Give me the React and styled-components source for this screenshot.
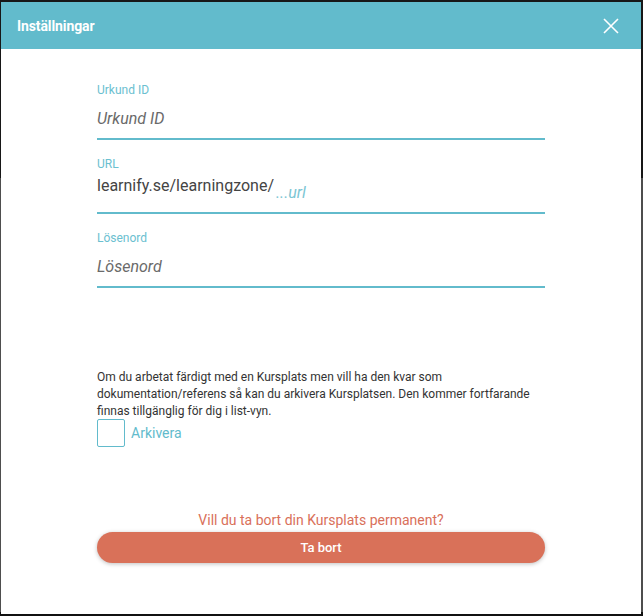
import React from "react";
import styled, { createGlobalStyle } from "styled-components";

const Global = createGlobalStyle`
  html, body { margin: 0; padding: 0; background: #1a1a1a; }
  body { font-family: Roboto, "Liberation Sans", Arial, sans-serif; }
  * { box-sizing: border-box; }
`;

const Backdrop = styled.div`
  height: 616px;
  padding: 2px 2px 2px 1px;
  background: linear-gradient(#171717 0 178px, #4e4e4e 178px 612px, #111 612px);
`;

const Modal = styled.div`
  height: 612px;
  background: #fff;
  display: flex;
  flex-direction: column;
`;

const Header = styled.div`
  height: 47px;
  flex: none;
  background: #62bbcc;
  display: flex;
  align-items: center;
  justify-content: space-between;
  padding: 0 22px 0 16px;
`;

const Title = styled.h1`
  margin: 0;
  color: #fff;
  font-size: 14px;
  font-weight: 700;
  letter-spacing: -0.1px;
`;

const CloseButton = styled.button`
  border: 0;
  background: none;
  padding: 0;
  width: 16px;
  height: 16px;
  display: flex;
  cursor: pointer;
`;

const Body = styled.div`
  width: 448px;
  margin: 0 auto;
  padding-top: 34px;
  display: flex;
  flex-direction: column;
`;

const Field = styled.div`
  display: flex;
  flex-direction: column;
  margin-bottom: 17px;
`;

const Label = styled.label`
  font-size: 12px;
  line-height: 14px;
  color: #6bc0d0;
  margin-bottom: 8px;
`;

const InputRow = styled.div`
  display: flex;
  align-items: flex-start;
  padding-bottom: 8px;
  border-bottom: 2px solid #62bbcc;
`;

const Prefix = styled.span`
  font-size: 16px;
  line-height: 12px;
  color: #444;
  padding-top: 1px;
  white-space: nowrap;
  margin-right: 2px;
`;

const Input = styled.input`
  flex: 1;
  min-width: 0;
  border: 0;
  outline: none;
  padding: 1px 0 0;
  height: 25px;
  line-height: 24px;
  font-family: inherit;
  font-size: 16px;
  color: #333;
  background: transparent;
  &::placeholder {
    font-style: italic;
    color: ${(p) => (p.$accent ? "#7cc6d4" : "#6a6a6a")};
  }
`;

const Paragraph = styled.p`
  margin: 64px 0 0;
  font-size: 12px;
  line-height: 16.8px;
  color: #333;
`;

const CheckRow = styled.label`
  display: flex;
  align-items: center;
  gap: 6px;
  cursor: pointer;
`;

const Box = styled.span`
  width: 28px;
  height: 28px;
  border: 1px solid #62bbcc;
  border-radius: 2px;
  background: #fff;
`;

const CheckText = styled.span`
  font-size: 14px;
  color: #62bbcc;
`;

const Question = styled.p`
  margin: 65px 0 4px;
  text-align: center;
  font-size: 14px;
  line-height: 16px;
  color: #d9705a;
`;

const DangerButton = styled.button`
  height: 31px;
  border: 0;
  border-radius: 16px;
  background: #d97159;
  color: #fff;
  font-family: inherit;
  font-size: 13px;
  font-weight: 500;
  box-shadow: 0 1px 4px rgba(0, 0, 0, 0.25);
  cursor: pointer;
`;

export default function App() {
  return (
    <>
      <Global />
      <Backdrop>
        <Modal>
          <Header>
            <Title>Inställningar</Title>
            <CloseButton aria-label="Stäng">
              <svg width="16" height="16" viewBox="0 0 16 16">
                <path d="M1 1L15 15M15 1L1 15" stroke="#fff" strokeWidth="1.6" fill="none" />
              </svg>
            </CloseButton>
          </Header>
          <Body>
            <Field>
              <Label>Urkund ID</Label>
              <InputRow>
                <Input placeholder="Urkund ID" />
              </InputRow>
            </Field>
            <Field>
              <Label>URL</Label>
              <InputRow>
                <Prefix>learnify.se/learningzone/</Prefix>
                <Input placeholder="...url" $accent />
              </InputRow>
            </Field>
            <Field>
              <Label>Lösenord</Label>
              <InputRow>
                <Input type="password" placeholder="Lösenord" />
              </InputRow>
            </Field>
            <Paragraph>
              Om du arbetat färdigt med en Kursplats men vill ha den kvar som
              dokumentation/referens så kan du arkivera Kursplatsen. Den kommer
              fortfarande finnas tillgänglig för dig i list-vyn.
            </Paragraph>
            <CheckRow>
              <Box />
              <CheckText>Arkivera</CheckText>
            </CheckRow>
            <Question>Vill du ta bort din Kursplats permanent?</Question>
            <DangerButton>Ta bort</DangerButton>
          </Body>
        </Modal>
      </Backdrop>
    </>
  );
}
